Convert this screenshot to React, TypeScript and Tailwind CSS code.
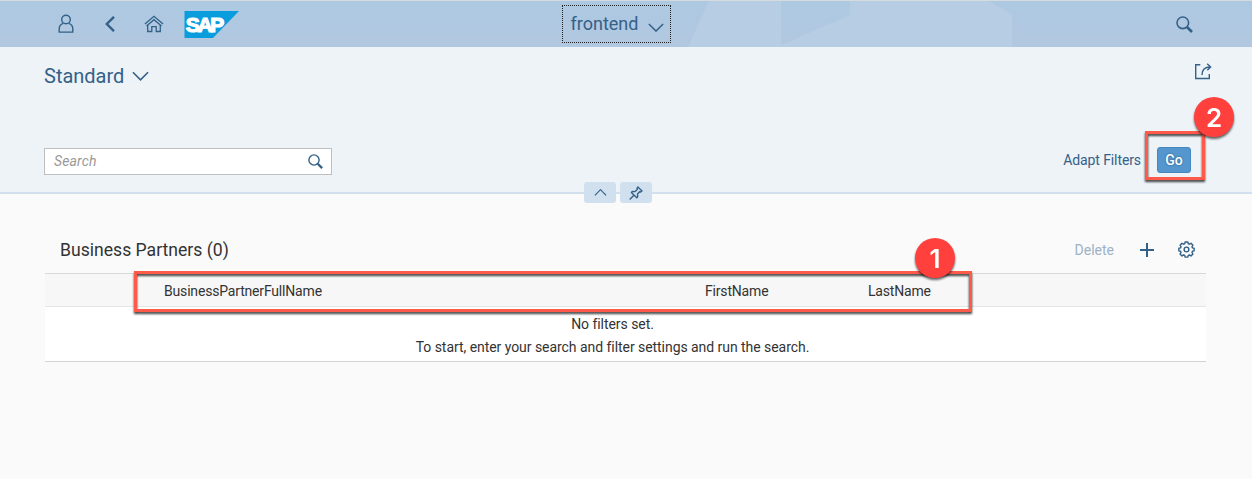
import type { ReactNode } from 'react';

type IconProps = { className?: string };

const UserIcon = ({ className }: IconProps) => (
  <svg viewBox="0 0 16 20" className={className} fill="none" stroke="currentColor" strokeWidth="1.4">
    <circle cx="8" cy="5.5" r="4.3" />
    <path d="M5.2 9.4C2.6 10.2 1.2 12.2 1.2 15v3.1h13.6V15c0-2.8-1.400-4.8-4-5.600" />
  </svg>
);

const BackIcon = ({ className }: IconProps) => (
  <svg viewBox="0 0 10 16" className={className} fill="none" stroke="currentColor" strokeWidth="2.4">
    <path d="M9 .8L1.800 8 9 15.200" />
  </svg>
);

const HomeIcon = ({ className }: IconProps) => (
  <svg viewBox="0 0 20 18" className={className} fill="none" stroke="currentColor" strokeWidth="1.300">
    <path d="M.9 9L10 1.300 19.100 9M2.500 11L10 4.700 17.500 11" />
    <path d="M3.700 10v6.500h4.100v-4.800h4.400v4.800h4.100V10" />
  </svg>
);

const SearchIcon = ({ className }: IconProps) => (
  <svg viewBox="0 0 17 17" className={className} fill="none" stroke="currentColor">
    <circle cx="6.800" cy="6.800" r="5.800" strokeWidth="1.600" />
    <path d="M11 11l5 5" strokeWidth="2.600" />
  </svg>
);

const ChevronIcon = ({ className }: IconProps) => (
  <svg viewBox="0 0 18 10" className={className} fill="none" stroke="currentColor" strokeWidth="1.700">
    <path d="M1 1l8 8 8-8" />
  </svg>
);

const ShareIcon = ({ className }: IconProps) => (
  <svg viewBox="0 0 18 17" className={className} fill="none" stroke="currentColor" strokeWidth="1.400">
    <path d="M6.300 1.700H1.700v13.800h13.600v-4.500" />
    <path d="M8 12c0-4.800 2.600-8 8.200-8M13.200 .7l3.400 3.300-3.300 3.200" />
  </svg>
);

const PinIcon = ({ className }: IconProps) => (
  <svg viewBox="0 0 14 14" className={className} fill="none" stroke="currentColor" strokeWidth="1.400" strokeLinejoin="round">
    <path d="M8.900 1l4.100 4-1.300 1-1.100-.3-2.100 2.300.2 2.900-1 .8L2.400 6.500l.9-1 2.800.1L8.300 3.500 8 2.100zM4.900 9.200L.7 13.400" />
  </svg>
);

const PlusIcon = ({ className }: IconProps) => (
  <svg viewBox="0 0 14 14" className={className} fill="none" stroke="currentColor" strokeWidth="2">
    <path d="M7 0v14M0 7h14" />
  </svg>
);

const GearIcon = ({ className }: IconProps) => (
  <svg viewBox="0 0 18 18" className={className} fill="none" stroke="currentColor" strokeWidth="1.500" strokeLinejoin="round">
    <circle cx="9" cy="9" r="2.500" />
    <path d="M7.600 1h2.800l.5 1.900 1.200.5 1.700-1 2 2-1 1.700.5 1.200 1.800.4v2.700l-1.800.5-.5 1.200 1 1.700-2 2-1.700-1-1.200.5-.5 1.800H7.600l-.5-1.800-1.200-.5-1.700 1-2-2 1-1.700-.5-1.200L.9 10.400V7.700l1.800-.4.5-1.200-1-1.700 2-2 1.700 1 1.200-.5z" />
  </svg>
);

const SapLogo = () => (
  <svg viewBox="0 0 55 27" className="h-[27px] w-[55px]">
    <path d="M.5 0H55L29 27H.5z" fill="#0a9ddd" />
    <text x="1.800" y="21" fill="#fff" stroke="#fff" strokeWidth="1.200" fontFamily="Liberation Sans, sans-serif" fontWeight="700" fontSize="21" textLength="38.500" lengthAdjust="spacing">SAP</text>
  </svg>
);

const Marker = ({ children, className }: { children: ReactNode; className: string }) => (
  <span className={`absolute flex size-10 items-center justify-center rounded-full bg-[#ff403c] font-[Inter,sans-serif] text-[26px] font-semibold text-white drop-shadow-[0_2px_1px_rgba(0,0,0,0.6)] ${className}`}>
    {children}
  </span>
);

const Highlight = ({ className }: { className: string }) => (
  <span className={`pointer-events-none absolute border-3 border-[#ff594a] drop-shadow-[0_2px_1px_rgba(0,0,0,0.75)] ${className}`} />
);

export default function App() {
  return (
    <div className="flex h-[479px] w-[1252px] flex-col overflow-hidden bg-[#fafafa] font-[Roboto,sans-serif] text-[14px] text-[#333]">
      <header className="relative flex h-[47px] shrink-0 items-center border-t border-[#d5dade] bg-linear-to-b from-[#adc9e2] to-[#b2c7e0] text-[#346187]">
        <svg viewBox="0 0 1252 46" className="absolute inset-0 h-[46px] w-[1252px]">
          <path d="M709 0H781V44L850 14V0H988L1012 13V46H688z" fill="#b7cde4" />
        </svg>
        <div className="relative grid w-full grid-cols-[1fr_109px_1fr] items-center">
          <div className="flex items-center pl-[58px]">
            <UserIcon className="h-5 w-4" />
            <BackIcon className="ml-[31px] h-4 w-2.5" />
            <HomeIcon className="ml-[29px] h-[18px] w-5" />
            <span className="ml-[20px] block">
              <SapLogo />
            </span>
          </div>
          <button className="-ml-[10px] flex h-[38px] w-[109px] items-center border border-dotted border-[#222] pl-2">
            <span className="text-[18px] leading-6">frontend</span>
            <ChevronIcon className="mt-1.5 ml-[10px] h-[9px] w-4" />
          </button>
          <SearchIcon className="mr-[59px] size-[17px] justify-self-end" />
        </div>
      </header>

      <section className="flex h-[147px] shrink-0 flex-col justify-between border-b-2 border-[#d1dfee] bg-[#eef3f8] text-[#346187]">
        <div className="flex items-start justify-between pt-4 pr-10 pl-11">
          <h1 className="flex items-center text-[20px] leading-[26px]">
            Standard
            <ChevronIcon className="ml-2 h-[10px] w-[17px]" />
          </h1>
          <ShareIcon className="h-[17px] w-[18px]" />
        </div>
        <div className="flex items-end justify-between pr-[61px] pb-[17px] pl-11">
          <div className="flex h-[27px] w-[288px] items-center justify-between border border-[#bfbfbf] bg-white pr-2 pl-[9px]">
            <span className="text-[14px] tracking-[0.15px] text-[#999] italic">Search</span>
            <SearchIcon className="size-[15px]" />
          </div>
          <div className="mb-0.5 flex items-center gap-4">
            <span className="tracking-[-0.1px]">Adapt Filters</span>
            <div className="relative flex">
              <button className="h-[26px] w-[34px] rounded-[3px] border border-[#4587c0] bg-[#5496cd] font-medium text-white [text-shadow:0_0_2px_#26547c]">Go</button>
              <Highlight className="-top-[16px] -left-[12px] h-[49px] w-[60px]" />
              <Marker className="-top-[50px] left-[37px]">2</Marker>
            </div>
          </div>
        </div>
      </section>

      <div className="relative z-10 -mt-3 ml-[584px] flex h-[21px] shrink-0 gap-1 text-[#346187]">
        <button className="flex w-8 items-center justify-center rounded-[3px] bg-[#d1e0ee]">
          <ChevronIcon className="h-[7px] w-[13px] rotate-180" />
        </button>
        <button className="flex w-8 items-center justify-center rounded-[3px] bg-[#d1e0ee]">
          <PinIcon className="size-[14px]" />
        </button>
      </div>

      <main className="mr-[46px] ml-[45px] pt-[23px]">
        <div className="flex h-[47px] items-center pr-[11px] pl-[15px]">
          <h2 className="pt-0.5 text-[17.6px]">Business Partners (0)</h2>
          <div className="ml-auto flex items-center text-[#346187]">
            <span className="pt-0.5 text-[#9db2c6]">Delete</span>
            <PlusIcon className="ml-[26px] size-[14px]" />
            <GearIcon className="ml-6 size-[17px]" />
          </div>
        </div>
        <div className="relative">
          <div className="flex h-[34px] items-center border-y border-t-[#d8dada] border-b-[#e5e5e5] bg-[#f7f7f7] pt-[3px] pl-[119px] tracking-[-0.18px]">
            <span className="w-[541px]">BusinessPartnerFullName</span>
            <span className="w-[163px]">FirstName</span>
            <span>LastName</span>
          </div>
          <div className="flex h-[55px] flex-col items-center border-b border-[#d3d3d3] bg-white pt-[6px] pr-[26px] leading-[22.5px] tracking-[-0.05px]">
            <p>No filters set.</p>
            <p>To start, enter your search and filter settings and run the search.</p>
          </div>
          <Highlight className="-top-[2px] left-[89px] h-[41px] w-[838px]" />
          <Marker className="-top-[35px] left-[870px]">1</Marker>
        </div>
      </main>
    </div>
  );
}
